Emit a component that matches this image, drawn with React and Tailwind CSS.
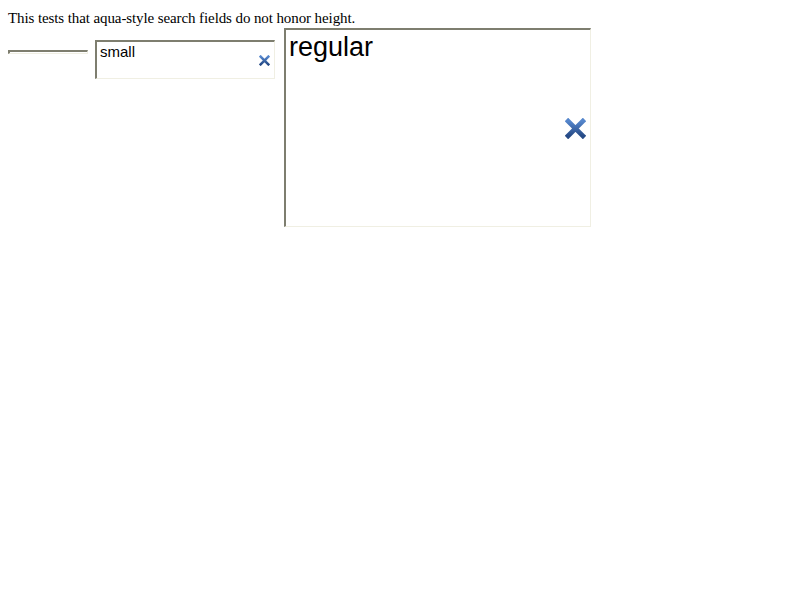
import React from 'react';

// Blue clear button glyph used by the search fields
const ClearIcon = ({ size }) => (
  <svg width={size} height={size} viewBox="0 0 20 20">
    <defs>
      <linearGradient id={`cg${size}`} x1="0" y1="0" x2="0" y2="1">
        <stop offset="0" stopColor="#5586cc" />
        <stop offset="1" stopColor="#264a86" />
      </linearGradient>
    </defs>
    <path
      d="M3 3 L17 17 M17 3 L3 17"
      stroke={`url(#cg${size})`}
      strokeWidth="4.6"
      strokeLinecap="square"
      fill="none"
    />
  </svg>
);

const SearchField = ({ className, children }) => (
  <div
    className={`relative border-t-2 border-l-2 border-t-[#7e7e6f] border-l-[#7e7e6f] border-b border-r border-b-[#f0efe3] border-r-[#f0efe3] bg-white ${className}`}
  >
    {children}
  </div>
);

export default function App() {
  return (
    <div className="min-h-[600px] bg-white p-2 text-black">
      <p className="mt-[1px] font-['Liberation_Serif',serif] text-[15px] leading-[19px] tracking-[-0.1px]">
        This tests that aqua-style search fields do not honor height.
      </p>
      <div className="flex items-start font-['Liberation_Sans',Arial,sans-serif]">
        {/* tiny */}
        <SearchField className="mt-[22px] h-[4px] w-[80px]" />

        {/* small */}
        <SearchField className="ml-[7px] mt-[12px] flex h-[39px] w-[180px] items-start">
          <span className="ml-[3px] mt-[1px] text-[15px] leading-[17px]">small</span>
          <span className="absolute right-[4px] top-[13px] flex">
            <ClearIcon size={11} />
          </span>
        </SearchField>

        {/* regular */}
        <SearchField className="ml-[9px] flex h-[199px] w-[307px] items-start">
          <span className="ml-[3px] mt-[2px] text-[27px] leading-[31px]">regular</span>
          <span className="absolute right-[4px] top-[88px] flex">
            <ClearIcon size={21} />
          </span>
        </SearchField>
      </div>
    </div>
  );
}
